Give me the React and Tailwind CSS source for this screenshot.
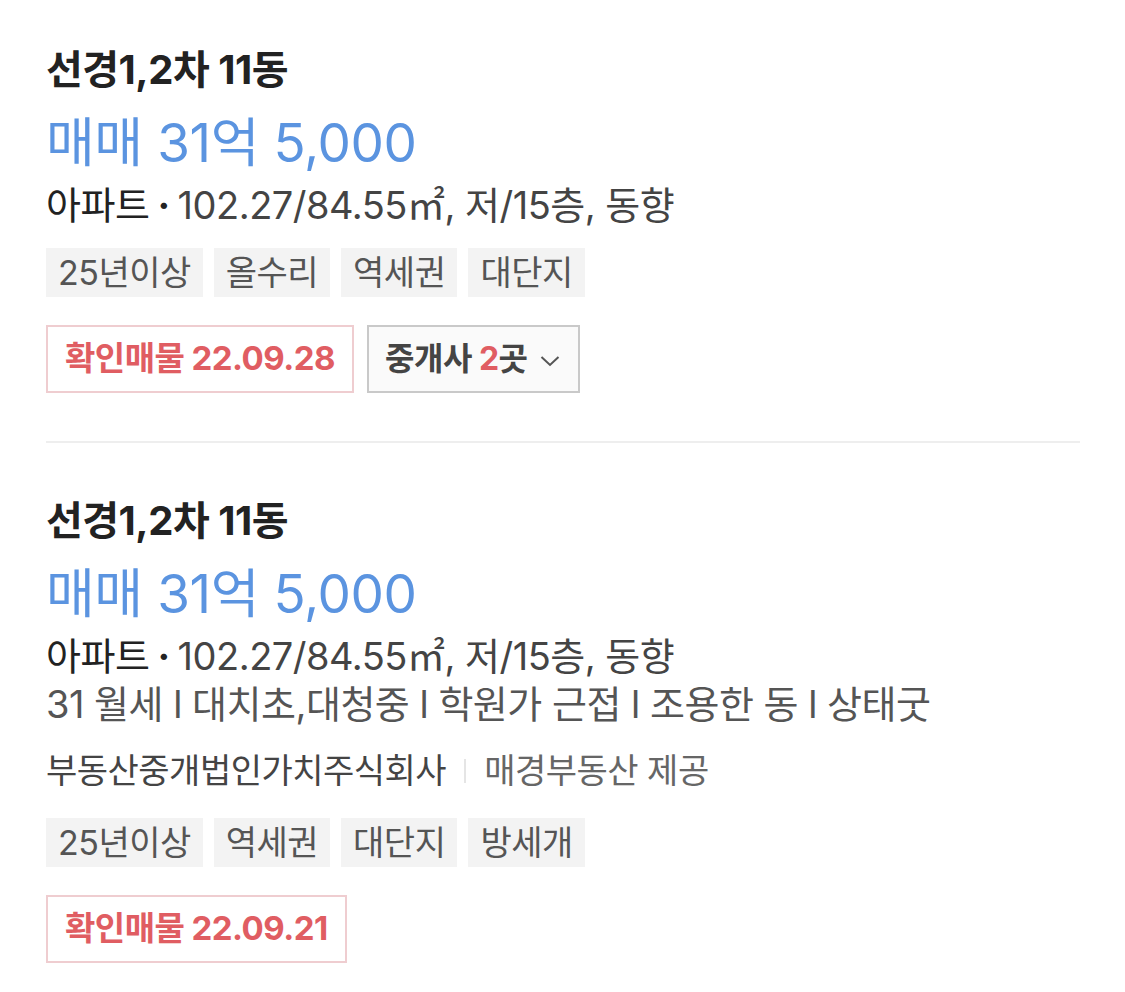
import React from "react";

const items = [
  {
    title: "선경1,2차 11동",
    price: "매매 31억 5,000",
    spec: "102.27/84.55㎡, 저/15층, 동향",
    desc: null,
    agency: null,
    tags: ["25년이상", "올수리", "역세권", "대단지"],
    date: "22.09.28",
    brokers: 2,
  },
  {
    title: "선경1,2차 11동",
    price: "매매 31억 5,000",
    spec: "102.27/84.55㎡, 저/15층, 동향",
    desc: "31 월세 l 대치초,대청중 l 학원가 근접 l 조용한 동 l 상태굿",
    agency: ["부동산중개법인가치주식회사", "매경부동산 제공"],
    tags: ["25년이상", "역세권", "대단지", "방세개"],
    date: "22.09.21",
    brokers: null,
  },
];

const Listing = ({ data }) => {
  return (
    <div className="flex flex-col items-start">
      <h2 className="text-[40px] font-bold text-[#222] leading-[44px] tracking-[-0.5px]">
        {data.title}
      </h2>
      <p className="text-[53px] text-[#5b94e0] leading-[60px] mt-[21px] tracking-[-0.4px]">
        {data.price}
      </p>
      <p className="text-[38px] text-[#444] leading-[48px] mt-[8px] tracking-[-0.5px]">
        <span className="text-[#222]">아파트</span>
        <span className="text-[#222] mx-[8px] font-bold">·</span>
        {data.spec}
      </p>
      {data.desc && (
        <p className="text-[38px] text-[#555] leading-[48px] tracking-[-0.5px]">
          {data.desc}
        </p>
      )}
      {data.agency && (
        <p className="text-[34px] text-[#444] leading-[48px] mt-[19px] tracking-[-0.5px] flex items-center">
          {data.agency[0]}
          <span className="w-[2px] h-[24px] bg-[#e5e5e5] mx-[18px]"></span>
          <span className="text-[#666]">{data.agency[1]}</span>
        </p>
      )}
      <div className={`flex gap-[11px] ${data.agency ? "mt-[23px]" : "mt-[19px]"}`}>
        {data.tags.map((tag) => (
          <span
            key={tag}
            className="bg-[#f3f3f3] text-[#555] text-[34px] h-[49px] px-[12px] flex items-center tracking-[-0.5px]"
          >
            {tag}
          </span>
        ))}
      </div>
      <div className="flex gap-[13px] mt-[28px]">
        <div className="border-2 border-[#efcdd0] h-[68px] px-[17px] flex items-center text-[#e05d62] font-bold text-[33px] tracking-[-0.5px]">
          확인매물<span className="ml-[7px]">{data.date}</span>
        </div>
        {data.brokers && (
          <div className="border-2 border-[#c9c9c9] bg-[#fafafa] h-[68px] pl-[16px] pr-[18px] flex items-center text-[#444] font-bold text-[32px] tracking-[-0.5px]">
            중개사<span className="text-[#e05d62] ml-[7px]">{data.brokers}</span>곳
            <svg width="20" height="12" viewBox="0 0 20 12" className="ml-[12px] mt-[4px]">
              <path d="M1.5 2 L10 10 L18.5 2" fill="none" stroke="#555" strokeWidth="2" />
            </svg>
          </div>
        )}
      </div>
    </div>
  );
};

export default function App() {
  return (
    <div
      className="w-[1125px] min-h-[992px] bg-white px-[46px] pt-[48px]"
      style={{ fontFamily: 'Inter, "Noto Sans CJK KR", "Noto Sans", sans-serif' }}
    >
      <Listing data={items[0]} />
      <div className="h-[2px] bg-[#eeeeee] w-[1034px] mt-[48px] mb-[56px]"></div>
      <Listing data={items[1]} />
    </div>
  );
}
